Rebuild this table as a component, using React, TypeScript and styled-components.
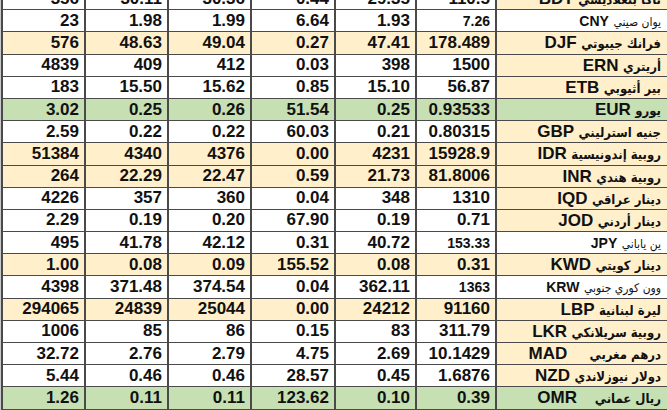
import { createGlobalStyle } from "styled-components"
import styled from "styled-components"

type Tone = "white" | "cream" | "green"

const colors: Record<Tone, string> = {
  white: "#ffffff",
  cream: "#fff0cb",
  green: "#c6e0b4",
}

const GlobalStyle = createGlobalStyle`
  html, body {
    margin: 0;
    padding: 0;
    background: #ffffff;
  }
  body {
    font-family: "Liberation Sans", Arial, "DejaVu Sans", sans-serif;
    color: #111;
  }
`

const Sheet = styled.div`
  width: 667px;
  height: 410px;
  overflow: hidden;
  background: #c9c9c9;
`

const Table = styled.div`
  margin-top: -12px;
  margin-left: 1px;
  border-left: 2px solid #4a4a4a;
`

const Row = styled.div`
  display: grid;
  grid-template-columns: 83px 83px 83px 84px 81px 80px 1fr;
  height: 22.2px;
  box-sizing: border-box;
  border-bottom: 1px solid #4a4a4a;
`

const Cell = styled.div<{ $tone: Tone; $small?: boolean }>`
  display: flex;
  align-items: center;
  justify-content: flex-end;
  padding-right: 5px;
  box-sizing: border-box;
  border-right: 2px solid #4a4a4a;
  background: ${(p) => colors[p.$tone]};
  font-size: ${(p) => (p.$small ? "14px" : "17px")};
  font-weight: 700;
  white-space: nowrap;
  overflow: hidden;
`

const NameCell = styled.div<{ $tone: Tone }>`
  direction: rtl;
  text-align: right;
  padding-right: 6px;
  box-sizing: border-box;
  background: ${(p) => colors[p.$tone]};
  white-space: pre;
  overflow: hidden;
  line-height: 21px;
  font-weight: 700;
`

const Arabic = styled.span<{ $small?: boolean }>`
  font-family: "DejaVu Sans Condensed", "DejaVu Sans", sans-serif;
  font-size: ${(p) => (p.$small ? "12px" : "13px")};
  font-weight: ${(p) => (p.$small ? 400 : 700)};
`

const Code = styled.span<{ $small?: boolean }>`
  font-family: "Liberation Sans", Arial, sans-serif;
  font-size: ${(p) => (p.$small ? "14px" : "17px")};
  font-weight: 700;
`

type Rate = {
  name: string
  code: string
  values: string[]
  tone: Tone
  nameTone: Tone
  small?: boolean
  gap?: string
}

const rates: Rate[] = [
  { name: "تاكا بنغلاديشي", code: "BDT", values: ["356", "30.11", "30.36", "0.44", "29.35", "110.5"], tone: "white", nameTone: "cream" },
  { name: "يوان صيني", code: "CNY", values: ["23", "1.98", "1.99", "6.64", "1.93", "7.26"], tone: "white", nameTone: "white", small: true },
  { name: "فرانك جيبوتي", code: "DJF", values: ["576", "48.63", "49.04", "0.27", "47.41", "178.489"], tone: "cream", nameTone: "cream" },
  { name: "أريتري", code: "ERN", values: ["4839", "409", "412", "0.03", "398", "1500"], tone: "white", nameTone: "cream" },
  { name: "بير أثيوبي", code: "ETB", values: ["183", "15.50", "15.62", "0.85", "15.10", "56.87"], tone: "white", nameTone: "cream" },
  { name: "يورو", code: "EUR", values: ["3.02", "0.25", "0.26", "51.54", "0.25", "0.93533"], tone: "green", nameTone: "green" },
  { name: "جنيه استرليني", code: "GBP", values: ["2.59", "0.22", "0.22", "60.03", "0.21", "0.80315"], tone: "white", nameTone: "cream" },
  { name: "روبية إندونيسية", code: "IDR", values: ["51384", "4340", "4376", "0.00", "4231", "15928.9"], tone: "cream", nameTone: "cream" },
  { name: "روبية هندي", code: "INR", values: ["264", "22.29", "22.47", "0.59", "21.73", "81.8006"], tone: "cream", nameTone: "cream" },
  { name: "دينار عراقي", code: "IQD", values: ["4226", "357", "360", "0.04", "348", "1310"], tone: "white", nameTone: "cream" },
  { name: "دينار أردني", code: "JOD", values: ["2.29", "0.19", "0.20", "67.90", "0.19", "0.71"], tone: "white", nameTone: "cream" },
  { name: "ين ياباني", code: "JPY", values: ["495", "41.78", "42.12", "0.31", "40.72", "153.33"], tone: "white", nameTone: "white", small: true },
  { name: "دينار كويتي", code: "KWD", values: ["1.00", "0.08", "0.09", "155.52", "0.08", "0.31"], tone: "cream", nameTone: "cream" },
  { name: "وون كوري جنوبي", code: "KRW", values: ["4398", "371.48", "374.54", "0.04", "362.11", "1363"], tone: "white", nameTone: "white", small: true },
  { name: "ليرة لبنانية", code: "LBP", values: ["294065", "24839", "25044", "0.00", "24212", "91160"], tone: "cream", nameTone: "cream" },
  { name: "روبية سريلانكي", code: "LKR", values: ["1006", "85", "86", "0.15", "83", "311.79"], tone: "white", nameTone: "cream" },
  { name: "درهم مغربي", code: "MAD", values: ["32.72", "2.76", "2.79", "4.75", "2.69", "10.1429"], tone: "white", nameTone: "cream", gap: "     " },
  { name: "دولار نيوزلاندي", code: "NZD", values: ["5.44", "0.46", "0.46", "28.57", "0.45", "1.6876"], tone: "white", nameTone: "cream" },
  { name: "ريال عماني", code: "OMR", values: ["1.26", "0.11", "0.11", "123.62", "0.10", "0.39"], tone: "green", nameTone: "green", gap: "    " },
]

export default function App() {
  return (
    <>
      <GlobalStyle />
      <Sheet>
        <Table>
          {rates.map((rate) => (
            <Row key={rate.code}>
              {rate.values.map((value, i) => (
                <Cell key={i} $tone={rate.tone} $small={rate.small && i === 5}>
                  {value}
                </Cell>
              ))}
              <NameCell $tone={rate.nameTone}>
                <Arabic $small={rate.small}>{rate.name}</Arabic>
                {rate.gap ?? " "}
                <Code $small={rate.small}>{rate.code}</Code>
              </NameCell>
            </Row>
          ))}
        </Table>
      </Sheet>
    </>
  )
}
